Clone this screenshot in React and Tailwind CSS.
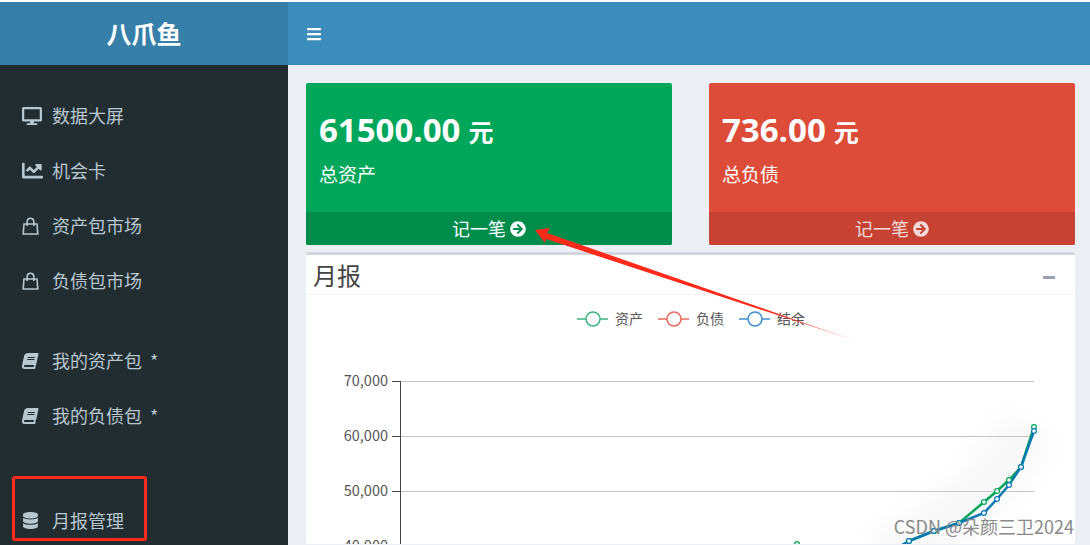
import React from "react";
import {
    FaArrowCircleRight,
    FaBars,
    FaBook,
    FaChartLine,
    FaDatabase,
    FaDesktop,
} from "react-icons/fa";

const cjk = "font-['Noto_Sans_CJK_SC','Noto_Sans',sans-serif]";

const BagIcon = () => (
    <svg width="17" height="18" viewBox="0 0 17 18" fill="none" stroke="currentColor" strokeWidth="1.6">
        <path d="M2 7h13l.8 10H1.2z" />
        <path d="M5.2 9V4.5a3.3 3.3 0 0 1 6.6 0V9" />
    </svg>
);

const SideItem = ({ icon, label, className = "" }) => (
    <div className={`flex h-[55px] items-center pl-[22px] text-[18px] text-[#b8c7ce] ${className}`}>
        <span className="flex w-[30px] shrink-0 items-center">{icon}</span>
        <span>{label}</span>
    </div>
);

const StatCard = ({ amount, label, body, foot, footText }) => (
    <div className={`w-[366px] overflow-hidden rounded-[2px] ${body}`}>
        <div className="h-[129px] pl-[13px] pt-[26px] text-white">
            <div className="flex h-[42px] items-center font-bold">
                <span className="text-[33px] font-['Open_Sans',sans-serif]">{amount}</span>
                <span className="ml-[8px] mt-[4px] text-[25px]">元</span>
            </div>
            <div className="mt-[9px] text-[19px]">{label}</div>
        </div>
        <div className={`flex h-[33px] items-center justify-center gap-[4px] text-[18px] ${foot} ${footText}`}>
            <span>记一笔</span>
            <FaArrowCircleRight className="text-[16px]" />
        </div>
    </div>
);

const green = [[797, 545], [909, 542], [934, 532], [959, 524], [984, 503], [997, 492], [1009, 481], [1021, 468], [1034, 428]];
const blue = [[897, 549], [909, 542], [934, 532], [959, 524], [984, 514], [997, 500], [1009, 486], [1021, 468], [1034, 432]];
const toPath = (pts) => pts.map((p) => p.join(",")).join(" ");

const Legend = ({ x, color, label }) => (
    <g>
        <line x1={x} x2={x + 31} y1="320" y2="320" stroke={color} strokeWidth="1.5" />
        <circle cx={x + 16} cy="320" r="7" fill="#fff" stroke={color} strokeWidth="1.5" />
        <text x={x + 38} y="325" fontSize="14" fill="#555">{label}</text>
    </g>
);

const Chart = () => (
    <svg width="769" height="249" viewBox="306 296 769 249" className="block">
        <Legend x={577} color="#3cb37f" label="资产" />
        <Legend x={658} color="#e8685a" label="负债" />
        <Legend x={739} color="#3c8dcc" label="结余" />
        <path d="M880 560 Q960 530 1030 430" fill="none" stroke="#f3f3f3" strokeWidth="55" opacity="0.6" className="blur-md" />
        {[382, 437, 492, 547].map((y, i) => (
            <g key={y}>
                <line x1="392" x2="1034" y1={y + 0.5} y2={y + 0.5} stroke="#c4c4c4" />
                <line x1="392" x2="400" y1={y + 0.5} y2={y + 0.5} stroke="#444" />
                <text x="388" y={y + 5} textAnchor="end" fontSize="14.5" fill="#555">
                    {["70,000", "60,000", "50,000", "40,000"][i]}
                </text>
            </g>
        ))}
        <line x1="400.5" x2="400.5" y1="382" y2="545" stroke="#444" />
        <polyline points={toPath(green.slice(1))} fill="none" stroke="#00a65a" strokeWidth="2.5" />
        <polyline points={toPath(blue)} fill="none" stroke="#0a78b4" strokeWidth="2.5" />
        {green.map(([x, y]) => (
            <circle key={x} cx={x} cy={y} r="2.4" fill="#fff" stroke="#00a65a" strokeWidth="1.2" />
        ))}
        {blue.slice(1).map(([x, y]) => (
            <circle key={x} cx={x} cy={y} r="2.4" fill="#fff" stroke="#0a78b4" strokeWidth="1.2" />
        ))}
    </svg>
);

export default function App() {
    return (
        <div className={`relative h-[545px] w-[1090px] overflow-hidden bg-white pt-[2px] ${cjk}`}>
            <div className="flex h-[543px]">
                <aside className="w-[288px] shrink-0 overflow-hidden bg-[#222d32]">
                    <div className="flex h-[63px] items-center justify-center bg-[#367fa9] text-[25px] font-bold text-white">
                        八爪鱼
                    </div>
                    <nav className="pt-[23px]">
                        <SideItem icon={<FaDesktop className="text-[20px]" />} label="数据大屏" />
                        <SideItem icon={<FaChartLine className="text-[21px]" />} label="机会卡" />
                        <SideItem icon={<BagIcon />} label="资产包市场" />
                        <SideItem icon={<BagIcon />} label="负债包市场" />
                        <SideItem icon={<FaBook className="-skew-x-12 text-[16px]" />} label="我的资产包  *" className="mt-[25px] whitespace-pre" />
                        <SideItem icon={<FaBook className="-skew-x-12 text-[16px]" />} label="我的负债包  *" className="whitespace-pre" />
                        <SideItem icon={<FaDatabase className="text-[17px]" />} label="月报管理" className="mt-[50px]" />
                    </nav>
                </aside>
                <div className="flex min-w-0 flex-1 flex-col bg-[#ecf0f5]">
                    <header className="flex h-[63px] shrink-0 items-center bg-[#3c8dbc] pl-[18px] text-white">
                        <FaBars className="text-[16px]" />
                    </header>
                    <main className="min-h-0 flex-1 overflow-hidden pl-[18px] pr-[15px] pt-[18px]">
                        <div className="flex gap-[37px]">
                            <StatCard amount="61500.00" label="总资产" body="bg-[#00a65a]" foot="bg-[#008d4c]" footText="text-white" />
                            <StatCard amount="736.00" label="总负债" body="bg-[#dd4b39]" foot="bg-[#c64333]" footText="text-white/80" />
                        </div>
                        <section className="mt-[7px] rounded-[3px] border-t-[3px] border-[#d2d6de] bg-white">
                            <div className="flex h-[40px] items-center justify-between border-b border-[#f4f4f4] pl-[7px] pr-[20px]">
                                <h3 className="text-[24px] leading-none text-[#444]">月报</h3>
                                <span className="mt-[6px] h-[3px] w-[12px] bg-[#97a0b3]" />
                            </div>
                            <Chart />
                        </section>
                    </main>
                </div>
            </div>

            {/* annotations drawn over the screenshot */}
            <svg width="1090" height="545" className="pointer-events-none absolute left-0 top-0">
                <defs>
                    <linearGradient id="tail" gradientUnits="userSpaceOnUse" x1="535" y1="230" x2="862" y2="343">
                        <stop offset="0.7" stopColor="#ff2a1a" />
                        <stop offset="1" stopColor="#ff2a1a" stopOpacity="0.15" />
                    </linearGradient>
                </defs>
                <polygon points="535,230 550,228 547,233 862,343 546,239 545,243" fill="url(#tail)" />
            </svg>
            <div className="absolute left-[12px] top-[476px] h-[65px] w-[135px] rounded-[3px] border-[3px] border-[#ff2a1a]" />
            <div className="absolute right-[16px] top-[513px] text-[18px] text-[#8a8a8a]">CSDN @朵颜三卫2024</div>
        </div>
    );
}
